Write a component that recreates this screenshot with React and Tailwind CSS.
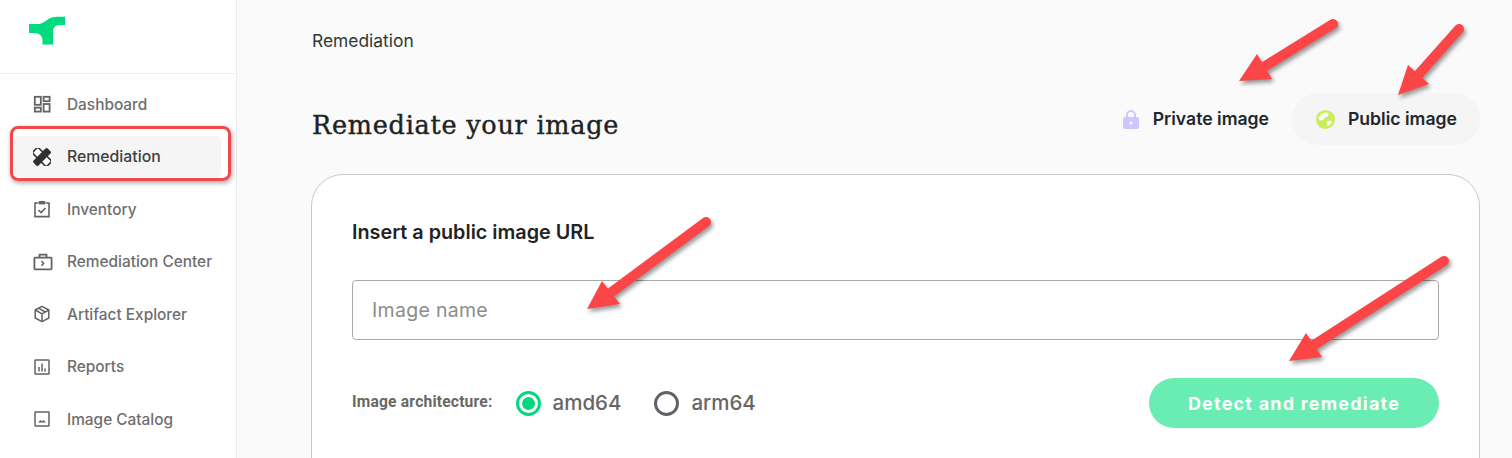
import React from 'react';

const DashIcon = () => (
  <svg width="18" height="18" viewBox="0 0 18 18" fill="none" stroke="currentColor" strokeWidth="1.8">
    <rect x="1.8" y="1.8" width="6" height="8" />
    <rect x="10.6" y="1.8" width="6" height="4.4" />
    <rect x="1.8" y="12.6" width="6" height="4" />
    <rect x="10.6" y="9" width="6" height="7.6" />
  </svg>
);

const BandageIcon = () => (
  <svg width="18" height="18" viewBox="0 0 18 18">
    <rect x="-1" y="5" width="20" height="8" rx="1.6" transform="rotate(45 9 9)" fill="#fff" stroke="#2f2f2f" strokeWidth="1.6" />
    <rect x="-1" y="5.500" width="20" height="7" rx="1.6" transform="rotate(-45 9 9)" fill="#2f2f2f" />
  </svg>
);

const ClipboardIcon = () => (
  <svg width="18" height="18" viewBox="0 0 18 18" fill="none" stroke="currentColor" strokeWidth="1.6">
    <path d="M5.5 3H2v13.6h14V3h-3.5" />
    <rect x="5.8" y="1" width="6.4" height="3.4" fill="currentColor" stroke="none" />
    <path d="M5.6 10.2l2.5 2.4 4.4-4.6" />
  </svg>
);

const CaseIcon = () => (
  <svg width="20" height="18" viewBox="0 0 20 18" fill="none" stroke="currentColor" strokeWidth="1.8">
    <rect x="1.4" y="4.6" width="17.2" height="11.8" rx="0.8" />
    <path d="M6.5 4.6V1.6h7v3" />
    <path d="M8.4 8l2.2 2.4-2.2 2.4" strokeWidth="1.5" />
  </svg>
);

const BoxIcon = () => (
  <svg width="18" height="18" viewBox="0 0 18 18" fill="none" stroke="currentColor" strokeWidth="1.5" strokeLinejoin="round">
    <path d="M9 1.4l6.8 3.6v8L9 16.6 2.2 13V5z" />
    <path d="M2.2 5L9 8.8 15.8 5M9 8.8v7.8M5.4 3.2l6.9 3.8" />
  </svg>
);

const ReportIcon = () => (
  <svg width="18" height="18" viewBox="0 0 18 18" fill="none" stroke="currentColor" strokeWidth="1.5">
    <rect x="2" y="2" width="14" height="14" rx="0.6" />
    <path d="M6 9v4.6M9 5.6v8M12 10.6v3" />
  </svg>
);

const PictureIcon = () => (
  <svg width="18" height="18" viewBox="0 0 18 18" fill="none" stroke="currentColor" strokeWidth="1.5">
    <rect x="2" y="2" width="14" height="14" rx="0.6" />
    <path d="M5 12.6l2.4-2.6 1.6 1.6 1.4-1.6 2.6 2.6z" fill="currentColor" stroke="none" />
  </svg>
);

const navItems = [
  { label: 'Dashboard', icon: <DashIcon /> },
  { label: 'Remediation', icon: <BandageIcon />, active: true },
  { label: 'Inventory', icon: <ClipboardIcon /> },
  { label: 'Remediation Center', icon: <CaseIcon /> },
  { label: 'Artifact Explorer', icon: <BoxIcon /> },
  { label: 'Reports', icon: <ReportIcon /> },
  { label: 'Image Catalog', icon: <PictureIcon /> },
];

const Arrow = ({ tail, tip, head }) => (
  <g>
    <line x1={tail[0]} y1={tail[1]} x2={(head[0] + head[2]) / 2} y2={(head[1] + head[3]) / 2} stroke="#fb4546" strokeWidth="10" strokeLinecap="round" />
    <polygon points={`${tip[0]},${tip[1]} ${head[0]},${head[1]} ${head[2]},${head[3]}`} fill="#fb4546" />
  </g>
);

const App = () => {
  return (
    <div className="relative flex h-[458px] w-[1512px] overflow-hidden bg-[#fafafa] font-['Inter',sans-serif]">
      <aside className="w-[237px] shrink-0 border-r border-[#ececec] bg-white">
        <div className="flex h-[74px] items-start border-b border-[#ececec] pl-[29px] pt-[16px]">
          <svg width="37" height="29" viewBox="0 0 37 29" fill="#00dc7d">
            <path d="M36 0.7V9H30C26 9 24 12 24 16V28.500H13.500V24C13.500 20 10 17 6 17H0V8H8C13 8 15 6 18 4C21 1.800 24 0.700 29 0.700z" />
          </svg>
        </div>
        <nav className="flex flex-col gap-[11.5px] pl-[14px] pr-[15px] pt-[9.9px]">
          {navItems.map((item) => (
            <div
              key={item.label}
              className={`flex h-[41px] items-center rounded-[4px] pl-[19px] font-medium ${item.active ? 'bg-[#f5f5f5] text-[15.8px] text-[#3f3f3f]' : 'text-[15.4px] text-[#6e6e6e]'}`}
            >
              <span className="flex w-[34px] shrink-0 items-center text-[#636363]">{item.icon}</span>
              {item.label}
            </div>
          ))}
        </nav>
      </aside>

      <main className="flex-1 pl-[74px] pr-[32px]">
        <p className="pl-px pt-[31px] text-[17.4px] leading-[20px] text-[#2f3a36]">Remediation</p>
        <div className="mt-[42px] flex items-center justify-between">
          <h1 className="pl-px pt-[11px] font-['DejaVu_Serif',serif] text-[25.5px] font-normal leading-[40px] tracking-[0.75px] text-[#222] [-webkit-text-stroke:0.4px_#222]">Remediate your image</h1>
          <div className="flex items-center">
            <button className="flex h-[52px] items-center pr-[23px] text-[17.6px] font-semibold text-[#22262b]">
              <svg width="16" height="19" viewBox="0 0 16 19" className="mr-[14px]">
                <path fill="#cdc6ff" d="M2 7h1V5a5 5 0 0110 0v2h1a2 2 0 012 2v8a2 2 0 01-2 2H2a2 2 0 01-2-2V9a2 2 0 012-2zm3 0h6V5a3 3 0 00-6 0z" />
                <circle cx="8" cy="13" r="1.6" fill="#fff" />
              </svg>
              Private image
            </button>
            <button className="flex h-[52px] w-[188px] items-center rounded-full bg-[#f5f5f5] pl-[24px] text-[17.6px] font-semibold text-[#22262b]">
              <svg width="19" height="19" viewBox="0 0 19 19" className="mr-[13px]">
                <circle cx="9.5" cy="9.5" r="9.5" fill="#c9ee5c" />
                <path fill="#fafafa" d="M6 3.500l5-1 2 1.500-1.500 2.500-3 1-1 2.500-3.500 .5-2-2.500zM10.500 11.500l4-1 1.500 1.500-2.500 3.500-2 .5z" />
              </svg>
              Public image
            </button>
          </div>
        </div>

        <section className="mt-[29px] h-[320px] rounded-[32px] border border-[#c9c9c9] bg-white px-[40px] pt-[45px]">
          <h2 className="text-[19.8px] font-semibold leading-[24px] text-[#1f2326]">Insert a public image URL</h2>
          <input
            type="text"
            placeholder="Image name"
            className="mt-[36px] block h-[60px] w-full rounded-[4px] border border-[#a9a9a9] bg-white px-[19px] text-[19.5px] tracking-[0.3px] placeholder:text-[#8c8c8c]"
          />
          <div className="mt-[38px] flex items-center justify-between">
            <div className="flex items-center font-['Roboto',sans-serif]">
              <span className="mr-[23px] text-[15.6px] font-bold tracking-[0.2px] text-[#686868]">Image architecture:</span>
              <label className="flex items-center font-['Inter',sans-serif] text-[20.5px] font-medium text-[#666]">
                <span className="mr-[12px] flex h-[25px] w-[25px] items-center justify-center rounded-full border-[3px] border-[#00d97e]">
                  <span className="h-[13px] w-[13px] rounded-full bg-[#00d97e]" />
                </span>
                amd64
              </label>
              <label className="ml-[33px] flex items-center font-['Inter',sans-serif] text-[20.5px] font-medium text-[#666]">
                <span className="mr-[12px] h-[25px] w-[25px] rounded-full border-[3px] border-[#5f6368]" />
                arm64
              </label>
            </div>
            <button className="h-[50px] w-[290px] rounded-full bg-[#69edb3] text-[18px] font-bold tracking-[1.2px] text-white">
              Detect and remediate
            </button>
          </div>
        </section>
      </main>

      {/* annotations drawn over the screenshot */}
      <div className="absolute left-[10px] top-[126px] h-[55px] w-[221px] rounded-[8px] border-[3px] border-[#f2474c] shadow-[1px_2px_5px_rgba(0,0,0,0.35)]" />
      <svg width="1512" height="458" className="pointer-events-none absolute left-0 top-0 drop-shadow-[2px_3px_2px_rgba(0,0,0,0.4)]">
        <Arrow tail={[1333, 24]} tip={[1239, 81]} head={[1257, 54, 1272, 79]} />
        <Arrow tail={[1459, 29]} tip={[1398, 95]} head={[1408, 65, 1429, 84]} />
        <Arrow tail={[706, 222]} tip={[587, 309]} head={[602, 281, 620, 304]} />
        <Arrow tail={[1444, 261]} tip={[1289, 361]} head={[1306, 333, 1322, 357]} />
      </svg>
    </div>
  );
};

export default App;
